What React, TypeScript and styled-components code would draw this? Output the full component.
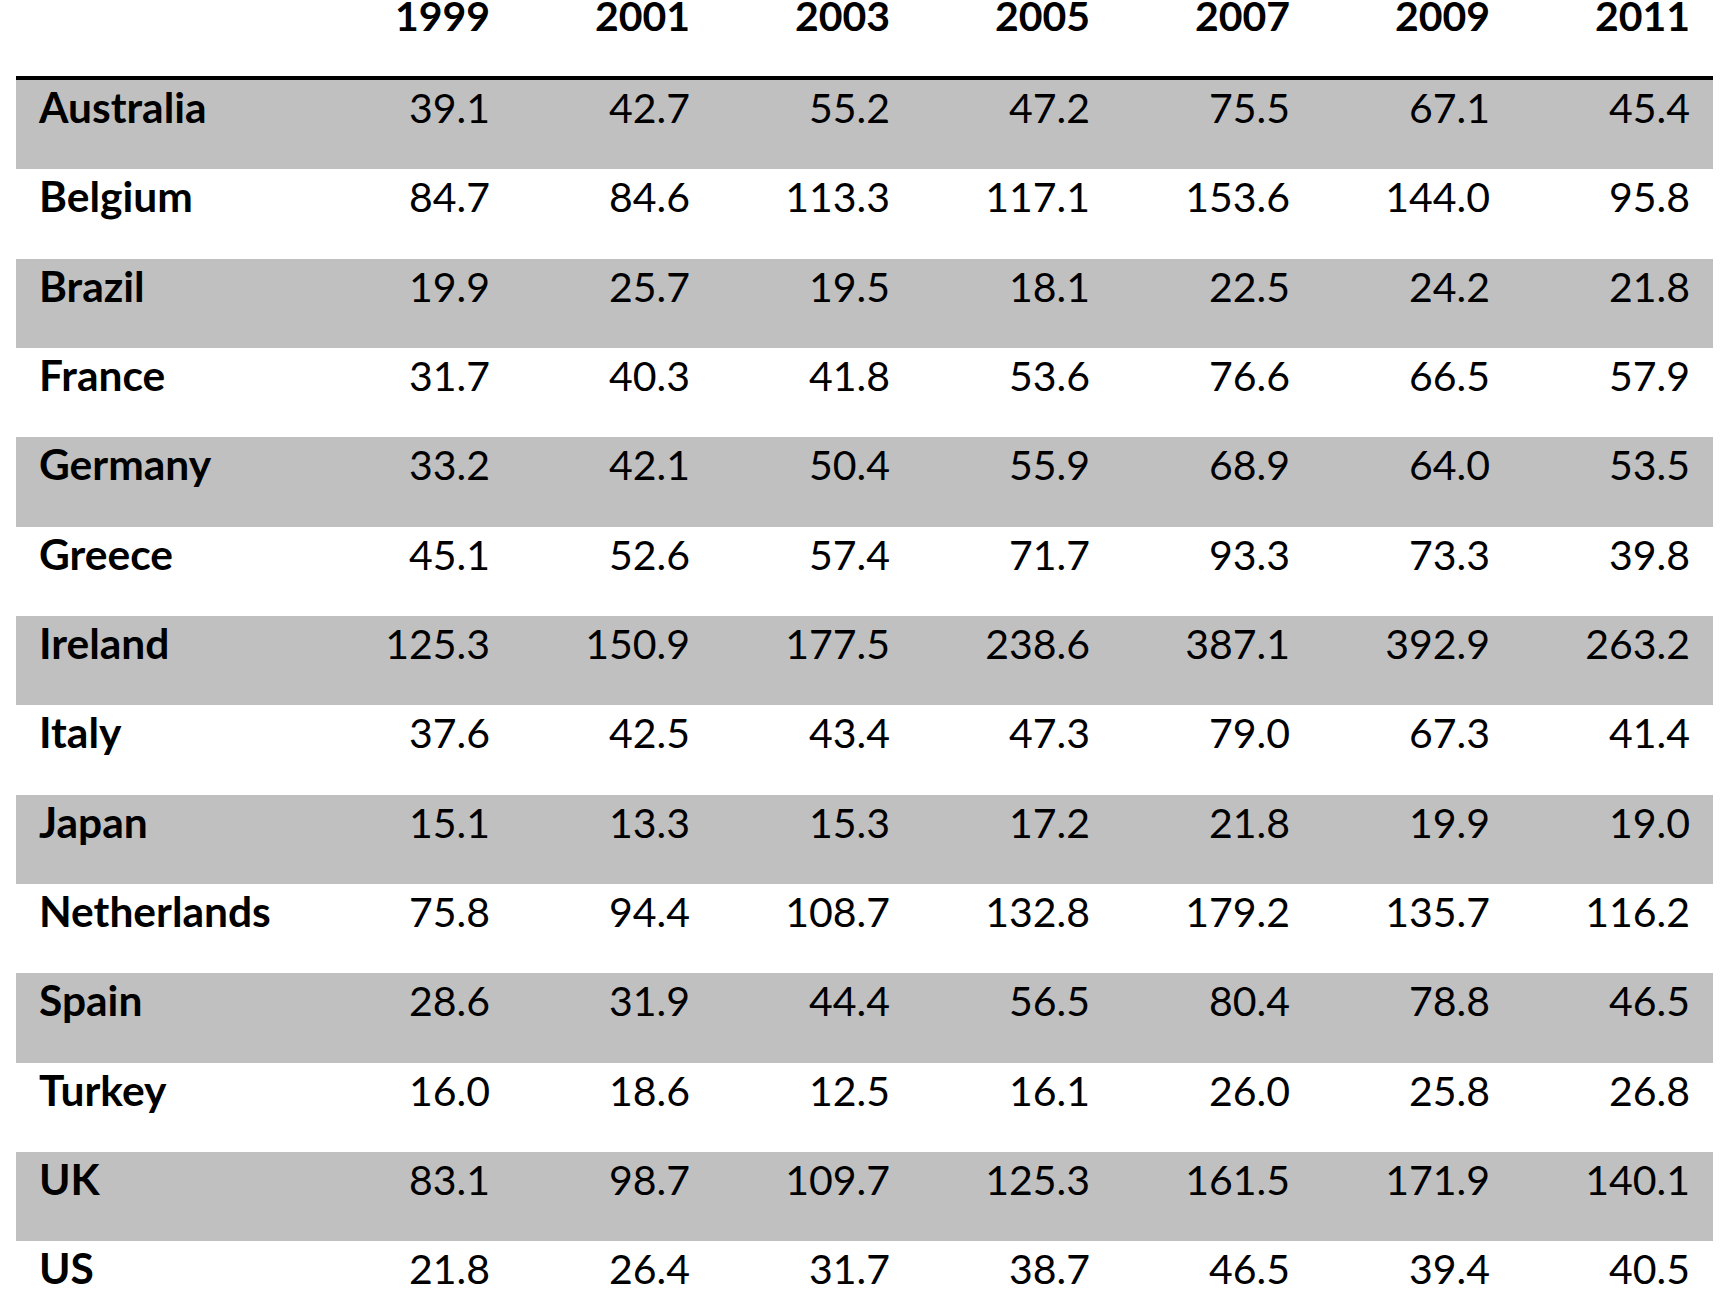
import React from 'react';
import styled, { createGlobalStyle } from 'styled-components';

const GlobalStyle = createGlobalStyle`
  body {
    margin: 0;
    background: #ffffff;
    font-family: Lato, 'Noto Sans', sans-serif;
    color: #000;
  }
`;

const years = ['1999', '2001', '2003', '2005', '2007', '2009', '2011'];

const rows: [string, string[]][] = [
  ['Australia', ['39.1', '42.7', '55.2', '47.2', '75.5', '67.1', '45.4']],
  ['Belgium', ['84.7', '84.6', '113.3', '117.1', '153.6', '144.0', '95.8']],
  ['Brazil', ['19.9', '25.7', '19.5', '18.1', '22.5', '24.2', '21.8']],
  ['France', ['31.7', '40.3', '41.8', '53.6', '76.6', '66.5', '57.9']],
  ['Germany', ['33.2', '42.1', '50.4', '55.9', '68.9', '64.0', '53.5']],
  ['Greece', ['45.1', '52.6', '57.4', '71.7', '93.3', '73.3', '39.8']],
  ['Ireland', ['125.3', '150.9', '177.5', '238.6', '387.1', '392.9', '263.2']],
  ['Italy', ['37.6', '42.5', '43.4', '47.3', '79.0', '67.3', '41.4']],
  ['Japan', ['15.1', '13.3', '15.3', '17.2', '21.8', '19.9', '19.0']],
  ['Netherlands', ['75.8', '94.4', '108.7', '132.8', '179.2', '135.7', '116.2']],
  ['Spain', ['28.6', '31.9', '44.4', '56.5', '80.4', '78.8', '46.5']],
  ['Turkey', ['16.0', '18.6', '12.5', '16.1', '26.0', '25.8', '26.8']],
  ['UK', ['83.1', '98.7', '109.7', '125.3', '161.5', '171.9', '140.1']],
  ['US', ['21.8', '26.4', '31.7', '38.7', '46.5', '39.4', '40.5']],
];

const Table = styled.div`
  margin-left: 16px;
  width: 1697px;
`;

const HeadRow = styled.div`
  display: grid;
  grid-template-columns: 297px repeat(7, 200px);
  height: 76px;
  border-bottom: 4px solid #000;
`;

const HeadCell = styled.div`
  padding-right: 23px;
  text-align: right;
  font-size: 41px;
  font-weight: 700;
  line-height: 31px;
`;

const Row = styled.div<{ $shaded: boolean }>`
  display: grid;
  grid-template-columns: 297px repeat(7, 200px);
  height: 89.33px;
  background: ${(p) => (p.$shaded ? '#c0c0c0' : '#ffffff')};
`;

const NameCell = styled.div`
  padding: 3px 0 0 23px;
  font-size: 42.5px;
  font-weight: 700;
  line-height: 48px;
`;

const ValueCell = styled.div`
  padding: 4px 23px 0 0;
  text-align: right;
  font-size: 41px;
  line-height: 48px;
`;

export default function App() {
  return (
    <>
      <GlobalStyle />
      <Table>
        <HeadRow>
          <div />
          {years.map((y) => (
            <HeadCell key={y}>{y}</HeadCell>
          ))}
        </HeadRow>
        {rows.map(([name, values], i) => (
          <Row key={name} $shaded={i % 2 === 0}>
            <NameCell>{name}</NameCell>
            {values.map((v, j) => (
              <ValueCell key={j}>{v}</ValueCell>
            ))}
          </Row>
        ))}
      </Table>
    </>
  );
}
